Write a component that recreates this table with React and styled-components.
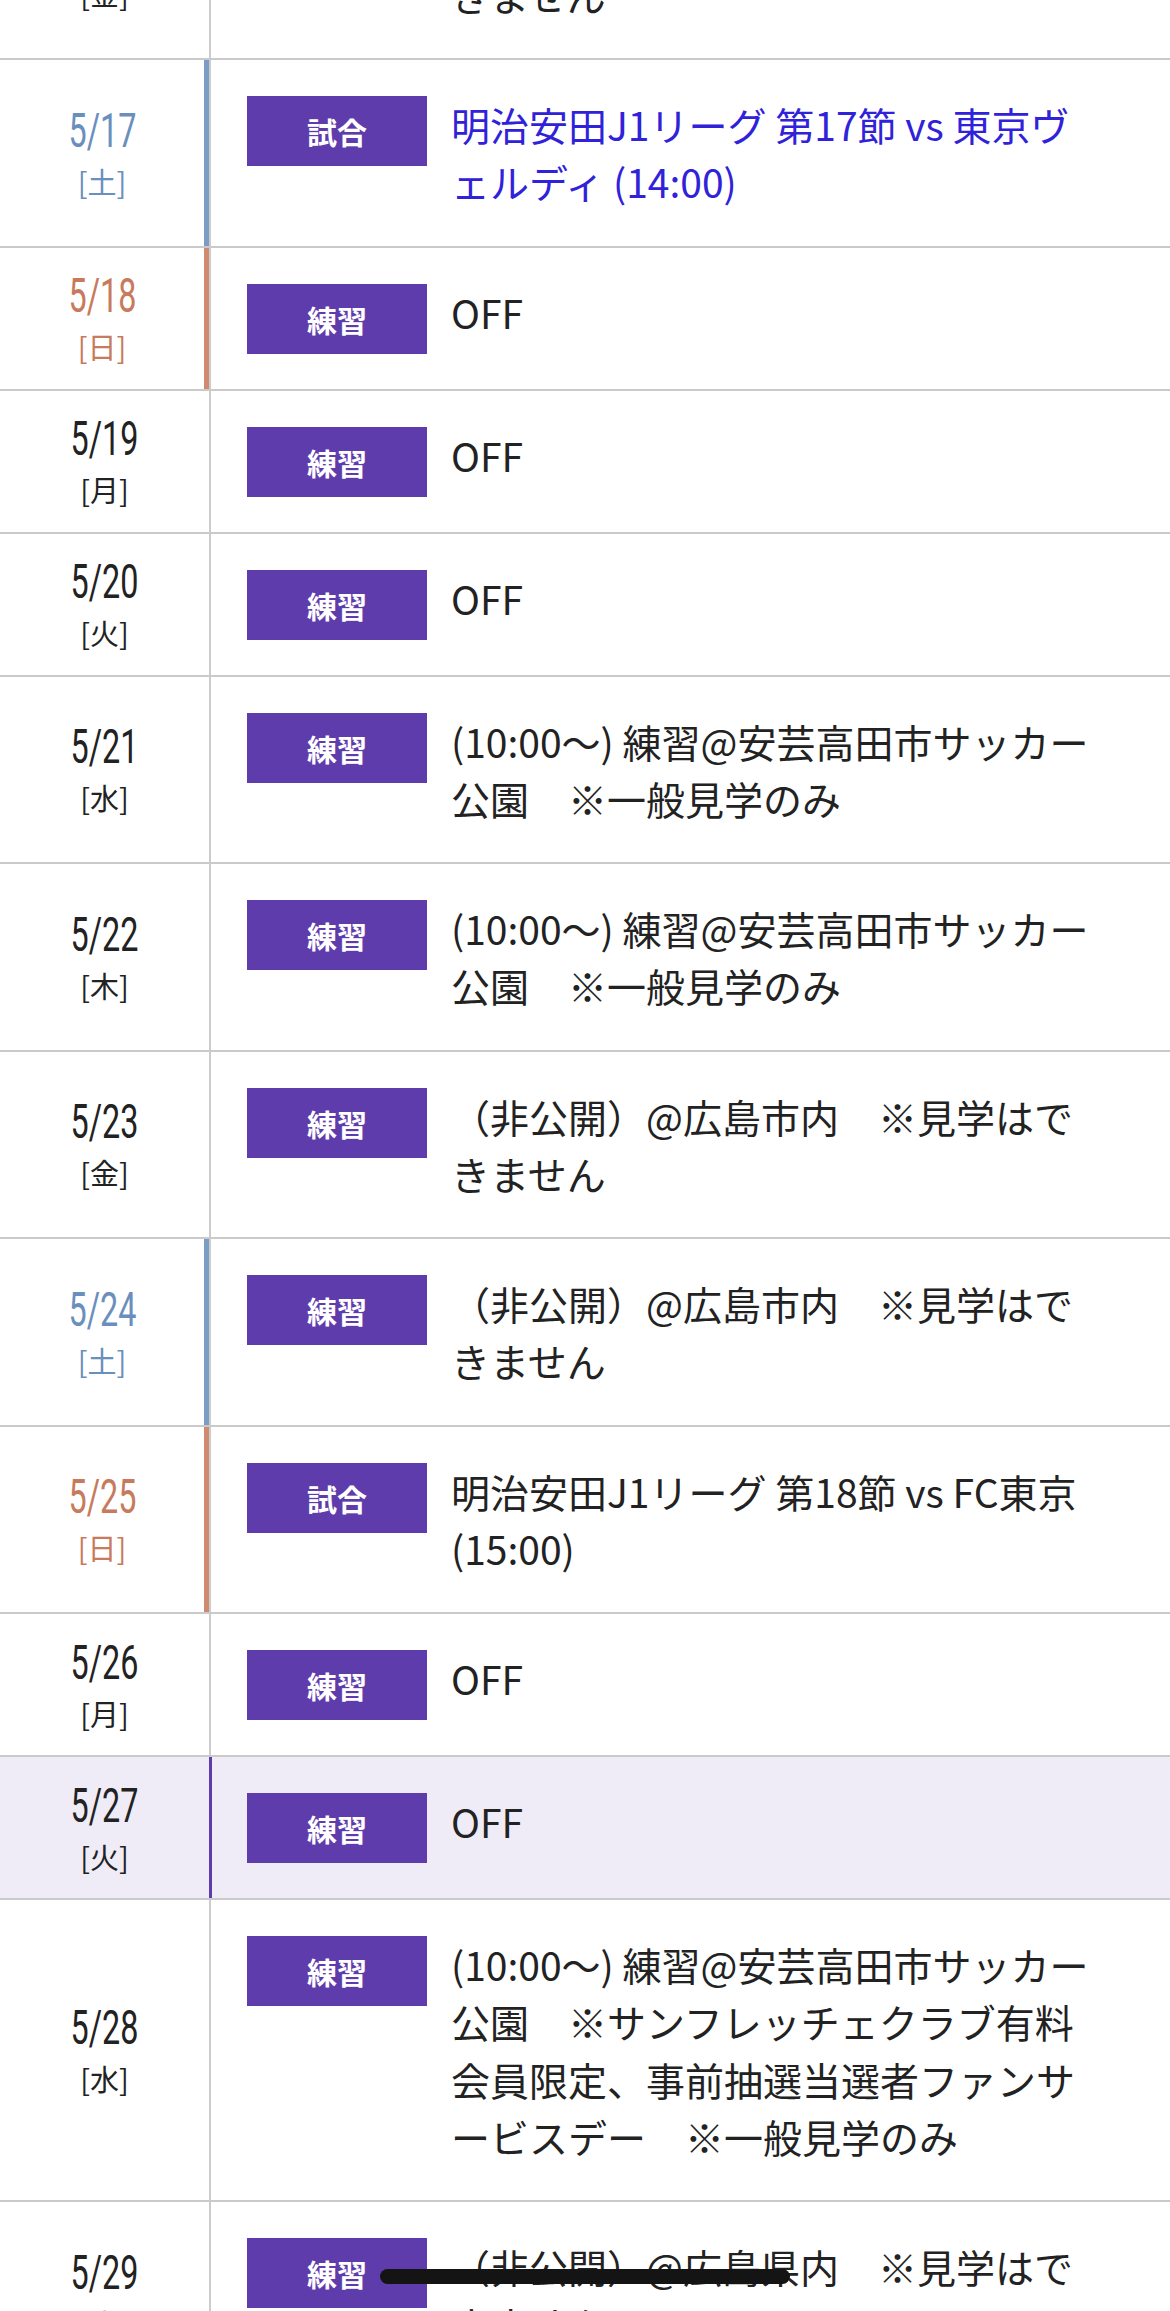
import React from 'react';
import styled, { createGlobalStyle } from 'styled-components';

const GlobalStyle = createGlobalStyle`
  html, body {
    margin: 0;
    padding: 0;
    background: #ffffff;
  }
  body {
    font-family: 'Noto Sans CJK JP', 'Noto Sans', sans-serif;
    color: #222222;
    overflow: hidden;
  }
`;

const accents = {
  sat: { text: '#6a8fbd', bar: '#7b9cc5' },
  sun: { text: '#c77a5c', bar: '#cf8a6f' },
};

const Schedule = styled.ul`
  list-style: none;
  margin: -127.5px 0 0;
  padding: 0;
`;

const Row = styled.li`
  display: grid;
  grid-template-columns: 209px 1fr;
  border-bottom: 2px solid #cacaca;
  background: ${p => (p.$today ? '#efecf7' : '#ffffff')};
`;

const DateCell = styled.div`
  box-sizing: border-box;
  display: flex;
  flex-direction: column;
  align-items: center;
  justify-content: center;
  color: ${p => (p.$accent ? accents[p.$accent].text : '#222222')};
  border-right: ${p => (p.$accent ? `5px solid ${accents[p.$accent].bar}` : 'none')};
`;

const DateNum = styled.span`
  display: block;
  font-family: 'Roboto', 'Liberation Sans', sans-serif;
  font-size: 49px;
  font-weight: 400;
  line-height: 47px;
  transform: scaleX(0.66);
`;

const DayLabel = styled.span`
  display: block;
  margin-top: 10px;
  font-size: 29px;
  line-height: 1.2;
`;

const ContentCell = styled.div`
  display: flex;
  align-items: flex-start;
  gap: 24px;
  padding: 36px 68px 35px ${p => (p.$today ? '35px' : '36px')};
  border-left: ${p => (p.$today ? '3px solid #5f3cab' : '2px solid #cccccc')};
`;

const Badge = styled.span`
  flex: 0 0 180px;
  height: 70px;
  display: flex;
  align-items: center;
  justify-content: center;
  background: #5f3cab;
  color: #ffffff;
  font-size: 30px;
  font-weight: 700;
`;

const Description = styled.p`
  flex: 1;
  min-width: 0;
  margin: 0;
  font-size: 39px;
  line-height: 57.25px;
  line-break: loose;
  color: #222222;
`;

const MatchLink = styled.a`
  color: #3022d9;
  text-decoration: none;
`;

const HomeIndicator = styled.div`
  position: fixed;
  left: 50%;
  bottom: 27px;
  width: 410px;
  height: 15px;
  margin-left: -205px;
  border-radius: 8px;
  background: #141414;
`;

const closed = '（非公開）@広島市内　※見学はできません';
const aki = '(10:00〜) 練習@安芸高田市サッカー公園　※一般見学のみ';

const days = [
  { date: '5/16', day: '金', type: '練習', text: closed },
  { date: '5/17', day: '土', type: '試合', text: '明治安田J1リーグ 第17節 vs 東京ヴェルディ (14:00)', accent: 'sat', link: true },
  { date: '5/18', day: '日', type: '練習', text: 'OFF', accent: 'sun' },
  { date: '5/19', day: '月', type: '練習', text: 'OFF' },
  { date: '5/20', day: '火', type: '練習', text: 'OFF' },
  { date: '5/21', day: '水', type: '練習', text: aki },
  { date: '5/22', day: '木', type: '練習', text: aki },
  { date: '5/23', day: '金', type: '練習', text: closed },
  { date: '5/24', day: '土', type: '練習', text: closed, accent: 'sat' },
  { date: '5/25', day: '日', type: '試合', text: '明治安田J1リーグ 第18節 vs FC東京 (15:00)', accent: 'sun' },
  { date: '5/26', day: '月', type: '練習', text: 'OFF' },
  { date: '5/27', day: '火', type: '練習', text: 'OFF', today: true },
  {
    date: '5/28',
    day: '水',
    type: '練習',
    text: '(10:00〜) 練習@安芸高田市サッカー公園　※サンフレッチェクラブ有料会員限定、事前抽選当選者ファンサービスデー　※一般見学のみ',
  },
  { date: '5/29', day: '木', type: '練習', text: '（非公開）@広島県内　※見学はできません' },
];

export default function App() {
  return (
    <>
      <GlobalStyle />
      <Schedule lang="ja">
        {days.map(d => (
          <Row key={d.date} $today={d.today}>
            <DateCell $accent={d.accent}>
              <DateNum>{d.date}</DateNum>
              <DayLabel>[{d.day}]</DayLabel>
            </DateCell>
            <ContentCell $today={d.today}>
              <Badge>{d.type}</Badge>
              <Description>
                {d.link ? <MatchLink href="#">{d.text}</MatchLink> : d.text}
              </Description>
            </ContentCell>
          </Row>
        ))}
      </Schedule>
      <HomeIndicator />
    </>
  );
}
